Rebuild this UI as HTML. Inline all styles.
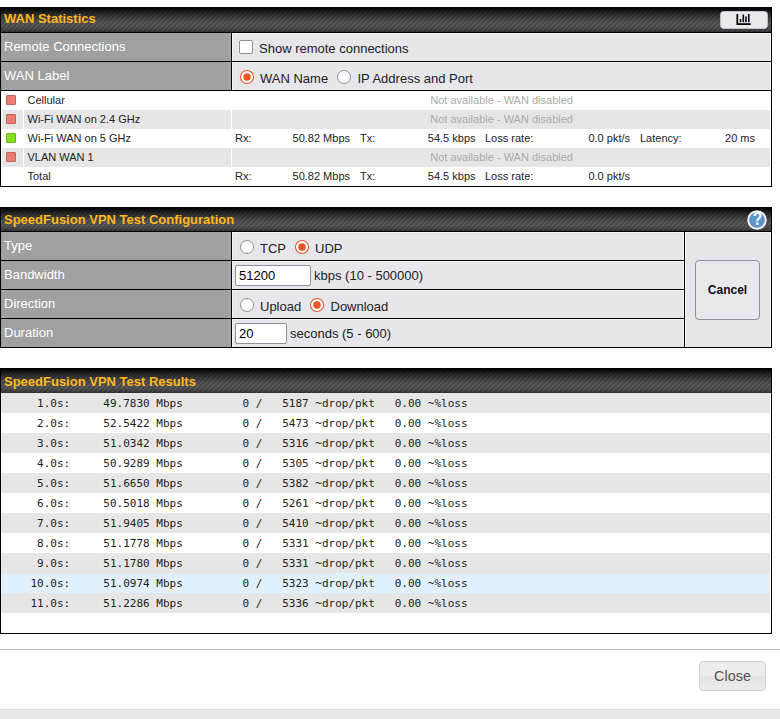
<!DOCTYPE html>
<html><head><meta charset="utf-8"><title>WAN Statistics</title>
<style>
html,body{margin:0;padding:0;background:#fff;}
body{font-family:"Liberation Sans",Arial,sans-serif;font-size:13px;color:#222;width:780px;height:719px;overflow:hidden;position:relative;}
.box{position:absolute;left:0;width:770px;border:1px solid #000;background:#fff;overflow:hidden;}
.tt{position:absolute;left:0;right:0;top:0;color:#ffb81c;font-weight:bold;font-size:13px;line-height:15px;padding:4px 0 0 3px;box-sizing:border-box;
 background:
  linear-gradient(rgba(0,0,0,1) 0%,rgba(0,0,0,.84) 7%,rgba(0,0,0,.56) 21%,rgba(0,0,0,.26) 41%,rgba(0,0,0,.05) 58%,rgba(0,0,0,0) 68%,rgba(0,0,0,.03) 80%,rgba(0,0,0,.2) 91%,rgba(0,0,0,.4) 100%),
  repeating-linear-gradient(135deg,rgba(255,255,255,0) 0px,rgba(255,255,255,0) 2.3px,rgba(255,255,255,.15) 2.8px,rgba(255,255,255,.15) 3.1px,rgba(255,255,255,0) 3.5355px),
  #4b4b4b;}
.lb{position:absolute;left:0;width:230px;height:28px;background:#a0a0a0;color:#fff;border-right:1px solid #000;border-bottom:1px solid #000;box-shadow:inset -1px 0 0 #a9a9a9;}
.lb span{position:absolute;left:3px;top:6px;white-space:nowrap;line-height:15px;}
.vl{position:absolute;left:231px;height:28px;background:#e6e6eb;border-bottom:1px solid #000;box-shadow:inset 1px 1px 0 #f5f5f9,inset -1px 0 0 #f5f5f9;}
.t13{position:absolute;white-space:nowrap;font-size:13px;line-height:15px;color:#222;}
.rd{position:absolute;}
.cb{position:absolute;width:12px;height:12px;border:1px solid #8f8f9d;border-radius:2px;background:#fff;}
.inp{position:absolute;height:19px;border:1px solid #8f8f9d;border-radius:2px;background:#fff;font-size:13px;line-height:19px;color:#000;padding-left:3px;box-sizing:content-box;}
.sr{position:absolute;left:0;width:770px;height:19px;}
.sr .c{position:absolute;top:0;height:19px;}
.s{position:absolute;top:3px;font-size:11px;line-height:13px;white-space:nowrap;color:#222;}
.s.nm{left:27.5px;}
.s.na{left:232.6px;width:538px;text-align:center;color:#aaa;}
.sq{position:absolute;left:6px;top:4px;width:8px;height:8px;border:1px solid #c0655e;background:#ee7b72;border-radius:1px;}
.sq.gr{background:#86e01e;border-color:#6ab618;}
.r{margin:0 1px 0 0;position:relative;height:19px;padding-top:1px;line-height:20px;font-family:"DejaVu Sans Mono","Liberation Mono",monospace;font-size:11px;color:#222;padding-left:3px;white-space:pre;}
.ra{background:#e6e6e6}.rb{background:#fff}.rh{background:#e1f0fb}
.hr{position:absolute;left:0;top:649px;width:780px;height:1px;background:#bdbdbd;}
.close{position:absolute;left:699px;top:661px;width:65px;height:28px;border:1px solid #d3d3d3;border-radius:4px;
 background:linear-gradient(#efefef 0%,#ececec 47%,#e3e3e3 53%,#e7e7e7 70%,#ededed 100%);color:#555;font-size:14.4px;line-height:28px;text-align:center;}
.foot{position:absolute;left:0;top:709px;width:780px;height:10px;background:#e8e8e8;border-top:1px solid #dcdcdc;box-sizing:border-box;}
.gbtn{position:absolute;left:719px;top:3px;width:47.8px;height:17.8px;border-radius:4.5px;background:#e9e9ed;box-shadow:inset 0 0 0 .6px #9a9aa8;}
.cancel{position:absolute;left:694px;top:28px;width:63px;height:58px;border:1px solid #8f8f9d;border-radius:4px;background:#e9e9ed;font-weight:bold;font-size:12px;line-height:58px;text-align:center;color:#111;}
.help{position:absolute;left:745.4px;top:.5px;}
</style></head><body>
<div class="box" style="top:7px;height:178px"><div class="tt" style="height:24px;border-bottom:1px solid #000;box-sizing:content-box;padding:0;"><span style="position:absolute;left:3px;top:3px">WAN Statistics</span><span class="gbtn"><svg width="48" height="18" viewBox="0 0 48 18" style="position:absolute;left:0;top:0"><path d="M17.3 3.1v10h13.4" fill="none" stroke="#000" stroke-width="1.7"/><path d="M20.5 11.2V8M23.3 11.2V3.5M26 11.2V5.5M28.8 11.2V3.1" fill="none" stroke="#0a0a14" stroke-width="1.6"/></svg></span></div><div class="lb" style="top:25px"><span>Remote Connections</span></div><div class="vl" style="top:25px;width:539px"></div><div class="lb" style="top:54px"><span>WAN Label</span></div><div class="vl" style="top:54px;width:539px"></div></div><span class="cb" style="left:239px;top:40px"></span><span class="t13" style="left:259px;top:41px">Show remote connections</span><svg class="rd" style="left:239px;top:69px" width="16" height="16" viewBox="0 0 16 16"><circle cx="8" cy="8" r="6.55" fill="#fff" stroke="#e95420" stroke-width="1.05"/><circle cx="8" cy="8" r="3.75" fill="#e95420"/></svg><span class="t13" style="left:260px;top:71px">WAN Name</span><svg class="rd" style="left:336px;top:69px" width="16" height="16" viewBox="0 0 16 16"><circle cx="8" cy="8" r="6.5" fill="#fff" stroke="#8f8f9d" stroke-width="1"/></svg><span class="t13" style="left:357.5px;top:71px">IP Address and Port</span><div class="sr" style="top:91px"><div class="c" style="left:2px;width:21px;background:#fff"></div><div class="c" style="left:24px;width:207px;background:#fff"></div><div class="c" style="left:232px;width:538px;background:#fff"></div><i class="sq rd"></i><span class="s nm">Cellular</span><span class="s na">Not available - WAN disabled</span></div><div class="sr" style="top:110px"><div class="c" style="left:2px;width:21px;background:#e6e6e6"></div><div class="c" style="left:24px;width:207px;background:#e6e6e6"></div><div class="c" style="left:232px;width:538px;background:#e6e6e6"></div><i class="sq rd"></i><span class="s nm">Wi-Fi WAN on 2.4 GHz</span><span class="s na">Not available - WAN disabled</span></div><div class="sr" style="top:129px"><div class="c" style="left:2px;width:21px;background:#fff"></div><div class="c" style="left:24px;width:207px;background:#fff"></div><div class="c" style="left:232px;width:538px;background:#fff"></div><i class="sq gr"></i><span class="s nm">Wi-Fi WAN on 5 GHz</span><span class="s" style="left:235px">Rx:</span><span class="s rt" style="right:420.0px">50.82 Mbps</span><span class="s" style="left:360px">Tx:</span><span class="s rt" style="right:294.5px">54.5 kbps</span><span class="s" style="left:485px">Loss rate:</span><span class="s rt" style="right:140.0px">0.0 pkt/s</span><span class="s" style="left:640px">Latency:</span><span class="s rt" style="right:15.0px">20 ms</span></div><div class="sr" style="top:148px"><div class="c" style="left:2px;width:21px;background:#e6e6e6"></div><div class="c" style="left:24px;width:207px;background:#e6e6e6"></div><div class="c" style="left:232px;width:538px;background:#e6e6e6"></div><i class="sq rd"></i><span class="s nm">VLAN WAN 1</span><span class="s na">Not available - WAN disabled</span></div><div class="sr" style="top:167px"><div class="c" style="left:2px;width:21px;background:#fff"></div><div class="c" style="left:24px;width:207px;background:#fff"></div><div class="c" style="left:232px;width:538px;background:#fff"></div><span class="s nm">Total</span><span class="s" style="left:235px">Rx:</span><span class="s rt" style="right:420.0px">50.82 Mbps</span><span class="s" style="left:360px">Tx:</span><span class="s rt" style="right:294.5px">54.5 kbps</span><span class="s" style="left:485px">Loss rate:</span><span class="s rt" style="right:140.0px">0.0 pkt/s</span></div><div class="box" style="top:207px;height:139px"><div class="tt" style="height:23px;border-bottom:1px solid #000;box-sizing:content-box;padding:0;"><span style="position:absolute;left:3px;top:4px">SpeedFusion VPN Test Configuration</span><svg class="help" width="22" height="22" viewBox="0 0 22 22"><circle cx="11" cy="11" r="8.8" fill="#5b93ca" stroke="#f1f6fd" stroke-width="1.9"/><text x="11.4" y="16.4" transform="matrix(1 0 0 1.17 0 -2.9)" text-anchor="middle" font-family="Liberation Sans,Arial,sans-serif" font-weight="bold" font-size="15.5" fill="#fff">?</text></svg></div><div class="lb" style="top:24px"><span style="top:6px">Type</span></div><div class="vl" style="top:24px;width:452px"></div><div class="lb" style="top:53px"><span style="top:6px">Bandwidth</span></div><div class="vl" style="top:53px;width:452px"></div><div class="lb" style="top:82px"><span style="top:6px">Direction</span></div><div class="vl" style="top:82px;width:452px"></div><div class="lb" style="top:111px"><span style="top:6px">Duration</span></div><div class="vl" style="top:111px;width:452px"></div><div style="position:absolute;left:683px;top:24px;width:86px;height:115px;background:#e6e6eb;border-left:1px solid #000;box-shadow:inset 1px 1px 0 #f5f5f9,inset -1px 0 0 #f5f5f9;"></div><div class="cancel" style="left:694px;top:52px">Cancel</div></div><svg class="rd" style="left:239px;top:239px" width="16" height="16" viewBox="0 0 16 16"><circle cx="8" cy="8" r="6.5" fill="#fff" stroke="#8f8f9d" stroke-width="1"/></svg><span class="t13" style="left:260px;top:241px">TCP</span><svg class="rd" style="left:294px;top:239px" width="16" height="16" viewBox="0 0 16 16"><circle cx="8" cy="8" r="6.55" fill="#fff" stroke="#e95420" stroke-width="1.05"/><circle cx="8" cy="8" r="3.75" fill="#e95420"/></svg><span class="t13" style="left:315px;top:241px">UDP</span><span class="inp" style="left:235px;top:265px;width:71px">51200</span><span class="t13" style="left:314px;top:268px">kbps (10 - 500000)</span><svg class="rd" style="left:239px;top:297px" width="16" height="16" viewBox="0 0 16 16"><circle cx="8" cy="8" r="6.5" fill="#fff" stroke="#8f8f9d" stroke-width="1"/></svg><span class="t13" style="left:260px;top:299px">Upload</span><svg class="rd" style="left:309px;top:297px" width="16" height="16" viewBox="0 0 16 16"><circle cx="8" cy="8" r="6.55" fill="#fff" stroke="#e95420" stroke-width="1.05"/><circle cx="8" cy="8" r="3.75" fill="#e95420"/></svg><span class="t13" style="left:330.5px;top:299px">Download</span><span class="inp" style="left:235px;top:323px;width:47px">20</span><span class="t13" style="left:290px;top:326px">seconds (5 - 600)</span><div class="box" style="top:368px;height:264px"><div class="tt" style="height:24px;padding:0;position:relative"><span style="position:absolute;left:3px;top:5px">SpeedFusion VPN Test Results</span></div><pre class="r ra">     1.0s:     49.7830 Mbps         0 /   5187 ~drop/pkt   0.00 ~%loss</pre>
<pre class="r rb">     2.0s:     52.5422 Mbps         0 /   5473 ~drop/pkt   0.00 ~%loss</pre>
<pre class="r ra">     3.0s:     51.0342 Mbps         0 /   5316 ~drop/pkt   0.00 ~%loss</pre>
<pre class="r rb">     4.0s:     50.9289 Mbps         0 /   5305 ~drop/pkt   0.00 ~%loss</pre>
<pre class="r ra">     5.0s:     51.6650 Mbps         0 /   5382 ~drop/pkt   0.00 ~%loss</pre>
<pre class="r rb">     6.0s:     50.5018 Mbps         0 /   5261 ~drop/pkt   0.00 ~%loss</pre>
<pre class="r ra">     7.0s:     51.9405 Mbps         0 /   5410 ~drop/pkt   0.00 ~%loss</pre>
<pre class="r rb">     8.0s:     51.1778 Mbps         0 /   5331 ~drop/pkt   0.00 ~%loss</pre>
<pre class="r ra">     9.0s:     51.1780 Mbps         0 /   5331 ~drop/pkt   0.00 ~%loss</pre>
<pre class="r rh">    10.0s:     51.0974 Mbps         0 /   5323 ~drop/pkt   0.00 ~%loss</pre>
<pre class="r ra">    11.0s:     51.2286 Mbps         0 /   5336 ~drop/pkt   0.00 ~%loss</pre>
</div><div class="hr"></div><div class="close">Close</div><div class="foot"></div></body></html>
